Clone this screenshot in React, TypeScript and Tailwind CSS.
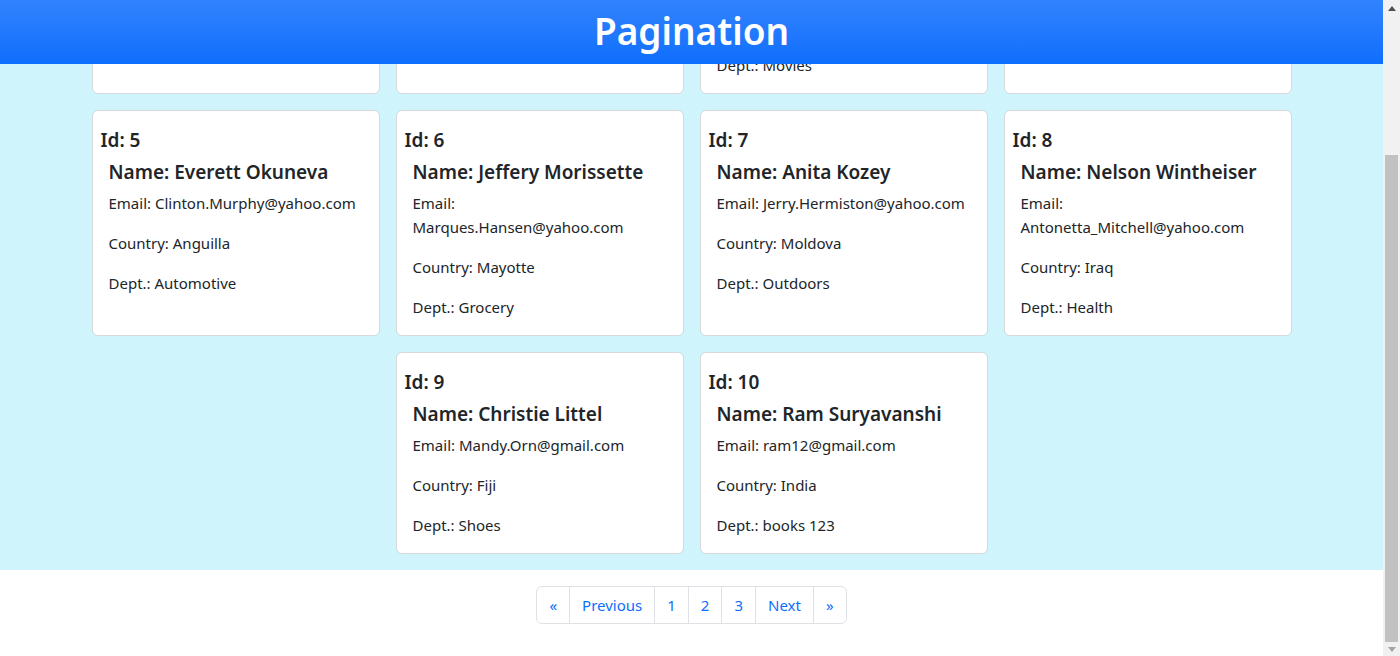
import React from "react";

type Person = { id: number; name: string; email: string; country: string; dept: string };

const people: Person[] = [
  { id: 1, name: "Ollie Schmitt", email: "Kody.Bode@gmail.com", country: "Peru", dept: "Books" },
  { id: 2, name: "Lela Kuhn", email: "Ayla.Roob@gmail.com", country: "Chile", dept: "Toys" },
  { id: 3, name: "Brandy Wunsch", email: "Josefina_Wintheiser@hotmail.com", country: "Guam", dept: "Movies" },
  { id: 4, name: "Jana Ryan", email: "Zoe.Lind@yahoo.com", country: "Nepal", dept: "Music" },
  { id: 5, name: "Everett Okuneva", email: "Clinton.Murphy@yahoo.com", country: "Anguilla", dept: "Automotive" },
  { id: 6, name: "Jeffery Morissette", email: "Marques.Hansen@yahoo.com", country: "Mayotte", dept: "Grocery" },
  { id: 7, name: "Anita Kozey", email: "Jerry.Hermiston@yahoo.com", country: "Moldova", dept: "Outdoors" },
  { id: 8, name: "Nelson Wintheiser", email: "Antonetta_Mitchell@yahoo.com", country: "Iraq", dept: "Health" },
  { id: 9, name: "Christie Littel", email: "Mandy.Orn@gmail.com", country: "Fiji", dept: "Shoes" },
  { id: 10, name: "Ram Suryavanshi", email: "ram12@gmail.com", country: "India", dept: "books 123" },
];

function Card({ p }: { p: Person }) {
  return (
    <div className="w-[288px] m-2 bg-white border border-[#d6d8da] rounded-md text-[#212529]">
      <h5 className="pt-[17px] px-2 mb-2 text-[19px] leading-6 font-semibold">Id: {p.id}</h5>
      <div className="px-4">
        <h5 className="text-[19px] leading-6 font-semibold mb-[7px]">Name: {p.name}</h5>
        <p className="text-[15px] leading-6 mb-4 break-words">Email: {p.email}</p>
        <p className="text-[15px] leading-6 mb-4">Country: {p.country}</p>
        <p className="text-[15px] leading-6 mb-4">Dept.: {p.dept}</p>
      </div>
    </div>
  );
}

function Scrollbar() {
  return (
    <div className="w-[17px] h-full bg-[#f1f1f1] flex flex-col shrink-0">
      <div className="h-[17px] flex items-center justify-center">
        <svg width="8" height="5" viewBox="0 0 8 5"><polygon points="0,5 8,5 4,0" fill="#505050" /></svg>
      </div>
      <div className="h-[138px]" />
      <div className="h-[487px] mx-[2px] bg-[#c1c1c1]" />
      <div className="flex-1 flex items-center justify-center">
        <svg width="8" height="5" viewBox="0 0 8 5"><polygon points="0,0 8,0 4,5" fill="#a3a3a3" /></svg>
      </div>
    </div>
  );
}

const pageItems = ["«", "Previous", "1", "2", "3", "Next", "»"];

export default function App() {
  return (
    <div
      className="h-[656px] w-full flex bg-white overflow-hidden"
      style={{ fontFamily: '"Noto Sans", "Open Sans", sans-serif' }}
    >
      <div className="relative flex-1 h-full min-w-0">
        <div className="h-full overflow-hidden flex flex-col justify-end">
          <main className="shrink-0 bg-[#cff4fc] pt-4 pb-2">
            <div className="mx-auto max-w-[1216px] flex flex-wrap justify-center">
              {people.map((p) => (
                <Card key={p.id} p={p} />
              ))}
            </div>
          </main>
          <nav className="shrink-0 flex justify-center pt-4 pb-8">
            <ul className="flex">
              {pageItems.map((t, i) => (
                <li
                  key={t}
                  className={`h-[38px] px-3 flex items-center text-[15px] text-[#0d6efd] bg-white border border-[#dee2e6] ${
                    i === 0 ? "rounded-l-md" : "-ml-px"
                  } ${i === pageItems.length - 1 ? "rounded-r-md" : ""}`}
                >
                  {t}
                </li>
              ))}
            </ul>
          </nav>
        </div>
        <header className="absolute top-0 left-0 right-0 h-16 bg-[#0d6efd] bg-gradient-to-b from-[#3183fd] to-[#0d6efd] flex items-center justify-center pb-1">
          <h1 className="text-white text-[37px] font-semibold leading-none">Pagination</h1>
        </header>
      </div>
      <Scrollbar />
    </div>
  );
}
